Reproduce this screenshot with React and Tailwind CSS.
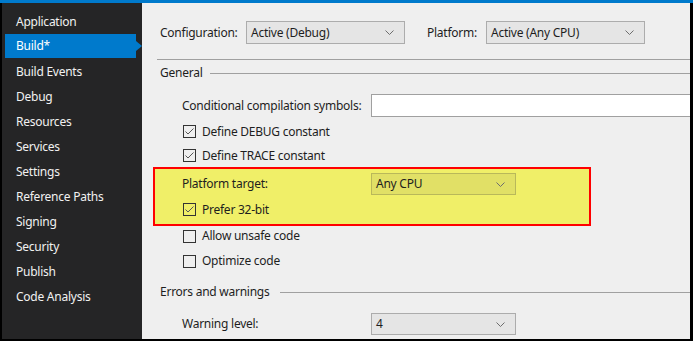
import React from "react";

const font = { fontFamily: '"Noto Sans", "Open Sans", sans-serif' };

function Chevron() {
  return (
    <svg width="9" height="5" viewBox="0 0 9 5" className="shrink-0">
      <polyline points="0.5,0.5 4.5,4.5 8.5,0.5" fill="none" stroke="#6d6d6d" strokeWidth="1" />
    </svg>
  );
}

function Dropdown({ value, w, yellow }) {
  return (
    <div
      className={
        "flex items-center justify-between pl-[4px] pr-[10px] h-full border text-[12px] " +
        (yellow ? "bg-[#e1e066] border-[#b9b85a] text-[#1e1e1e]" : "bg-[#e5e5e5] border-[#acacac] text-[#1e1e1e]")
      }
      style={{ width: w }}
    >
      <span>{value}</span>
      <Chevron />
    </div>
  );
}

function Check({ checked }) {
  return (
    <div className="w-[13px] h-[13px] border border-[#333333] flex items-center justify-center shrink-0">
      {checked && (
        <svg width="11" height="11" viewBox="0 0 11 11">
          <polyline points="1.5,5.5 4,8 9.5,2.5" fill="none" stroke="#555555" strokeWidth="1" />
        </svg>
      )}
    </div>
  );
}

function CheckRow({ label, checked, h }) {
  return (
    <div className={"flex items-center pl-[41px] " + h}>
      <Check checked={checked} />
      <span className="ml-[6px] text-[12px] text-[#1e1e1e]">{label}</span>
    </div>
  );
}

const items = [
  "Application",
  "Build*",
  "Build Events",
  "Debug",
  "Resources",
  "Services",
  "Settings",
  "Reference Paths",
  "Signing",
  "Security",
  "Publish",
  "Code Analysis",
];

export default function App() {
  return (
    <div className="w-[693px] h-[341px] bg-black pl-[2px] pr-[3px] pb-[2px] flex flex-col tracking-[-0.25px]" style={font}>
      <div className="h-[3px] bg-[#007acc] shrink-0 -ml-[2px] -mr-[3px]" />
      <div className="flex flex-1 min-h-0">
        {/* Sidebar */}
        <div className="w-[140px] bg-[#252526] pt-[6px] shrink-0">
          {items.map((it, i) => (
            <div key={it} className="h-[25px] relative">
              {i === 1 ? (
                <div className="ml-[3px] w-[131px] h-[24px] bg-[#007acc] flex items-center pl-[11px] text-[12px] text-white relative">
                  {it}
                  <div className="absolute right-[-6px] top-[7px] w-0 h-0 border-t-[5px] border-b-[5px] border-l-[6px] border-t-transparent border-b-transparent border-l-[#007acc]" />
                </div>
              ) : (
                <div className="h-full flex items-center pl-[14px] text-[12px] text-[#f1f1f1]">{it}</div>
              )}
            </div>
          ))}
        </div>

        {/* Main */}
        <div className="flex-1 bg-[#efefef] flex flex-col overflow-hidden text-[#1e1e1e]">
          {/* Toolbar */}
          <div className="flex items-center h-[23px] mt-[18px] pl-[18px] text-[12px]">
            <span className="w-[86px]">Configuration:</span>
            <Dropdown value="Active (Debug)" w="159px" />
            <span className="ml-[22px] w-[59px]">Platform:</span>
            <Dropdown value="Active (Any CPU)" w="159px" />
          </div>
          <div className="h-px bg-[#a0a0a0] mt-[15px] ml-[15px]" />

          {/* General */}
          <div className="flex items-center h-[20px] mt-[3px] pl-[18px] text-[12px]">
            <span>General</span>
            <div className="flex-1 h-px bg-[#a0a0a0] ml-[8px]" />
          </div>

          <div className="flex items-center h-[23px] mt-[11px] pl-[40px] text-[12px]">
            <span className="w-[189px]">Conditional compilation symbols:</span>
            <div className="flex-1 h-full bg-white border border-[#a0a0a0] border-r-0" />
          </div>

          <CheckRow label="Define DEBUG constant" checked h="h-[25px] mt-[2px]" />
          <CheckRow label="Define TRACE constant" checked h="h-[23px]" />

          {/* Highlight box */}
          <div className="ml-[11px] w-[438px] h-[59px] border-2 border-[#ff0000] bg-[#f0ef68] flex flex-col pt-[4px]">
            <div className="flex items-center h-[22px] pl-[27px] text-[12px]">
              <span className="w-[189px]">Platform target:</span>
              <Dropdown value="Any CPU" w="145px" yellow />
            </div>
            <div className="flex items-center h-[25px] mt-[2px] pl-[28px]">
              <Check checked />
              <span className="ml-[6px] text-[12px]">Prefer 32-bit</span>
            </div>
          </div>

          <CheckRow label="Allow unsafe code" h="h-[20px]" />
          <CheckRow label="Optimize code" h="h-[20px] mt-[5px]" />

          <div className="flex items-center h-[20px] mt-[11px] pl-[18px] text-[12px]">
            <span>Errors and warnings</span>
            <div className="flex-1 h-px bg-[#a0a0a0] ml-[10px]" />
          </div>

          <div className="flex items-center h-[22px] mt-[11px] pl-[40px] text-[12px]">
            <span className="w-[189px]">Warning level:</span>
            <Dropdown value="4" w="145px" />
          </div>
        </div>
      </div>
    </div>
  );
}
